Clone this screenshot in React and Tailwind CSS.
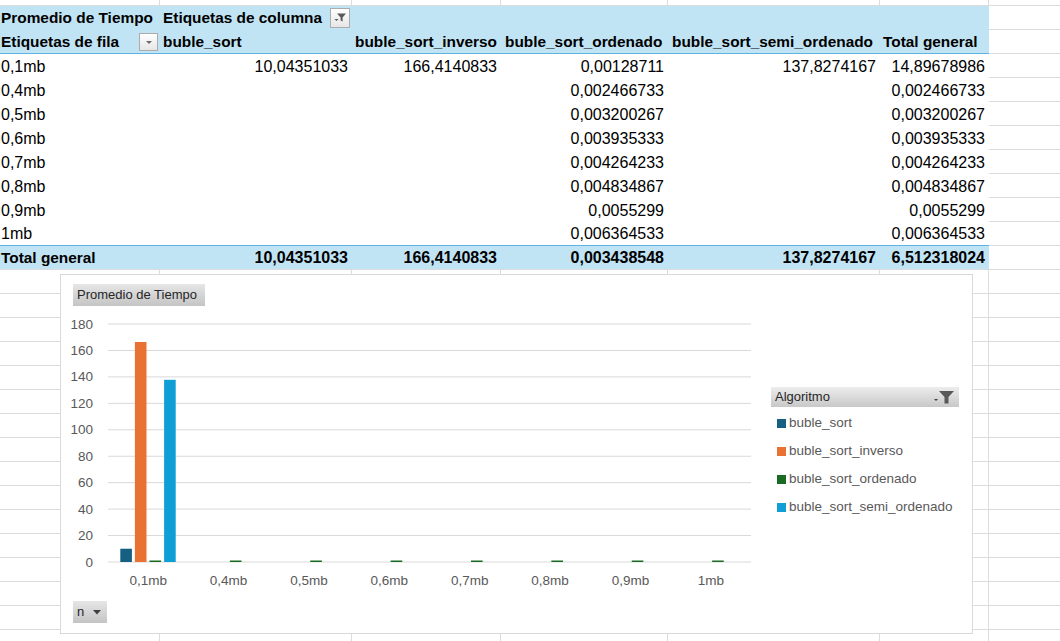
import React from "react";

const gridB = "border-r border-b border-[#dcdcdc]";
const colW = ["w-[160px]", "w-[192px]", "w-[149px]", "w-[167px]", "w-[212px]", "w-[109px]", "w-[90px]"];

const data = [
  ["0,1mb", "10,04351033", "166,4140833", "0,00128711", "137,8274167", "14,89678986"],
  ["0,4mb", "", "", "0,002466733", "", "0,002466733"],
  ["0,5mb", "", "", "0,003200267", "", "0,003200267"],
  ["0,6mb", "", "", "0,003935333", "", "0,003935333"],
  ["0,7mb", "", "", "0,004264233", "", "0,004264233"],
  ["0,8mb", "", "", "0,004834867", "", "0,004834867"],
  ["0,9mb", "", "", "0,0055299", "", "0,0055299"],
  ["1mb", "", "", "0,006364533", "", "0,006364533"],
];
const totals = ["Total general", "10,04351033", "166,4140833", "0,003438548", "137,8274167", "6,512318024"];

function GrayRow({ h = "h-[24px]" }) {
  return (
    <div className={`flex ${h}`}>
      {colW.map((c, i) => (
        <div key={i} className={`${c} shrink-0 ${gridB}`} />
      ))}
    </div>
  );
}

function GCell() {
  return <div className={`w-[90px] shrink-0 h-full ${gridB}`} />;
}

function FilterBtn() {
  return (
    <div className="w-[20px] h-[20px] shrink-0 border border-[#acacac] bg-gradient-to-b from-[#ffffff] to-[#e6e6e6] flex items-center justify-center">
      <svg width="16" height="16" viewBox="0 0 16 16">
        <path d="M5 3.5 H14 L10.6 7.5 V11.5 L8.6 10.5 V7.5 Z" fill="#5a5a5a" />
        <path d="M2.5 9 H6.5 L4.5 11 Z" fill="#5a5a5a" />
      </svg>
    </div>
  );
}

function DropBtn() {
  return (
    <div className="w-[19px] h-[18px] shrink-0 border border-[#acacac] bg-gradient-to-b from-[#ffffff] to-[#e6e6e6] flex items-center justify-center">
      <svg width="10" height="10" viewBox="0 0 10 10">
        <path d="M2 4 H8 L5 7 Z" fill="#6a6a6a" />
      </svg>
    </div>
  );
}

const numCell = "shrink-0 h-full flex items-center justify-end pr-[4px] text-[16px]";

function Chart() {
  const axisY = 287;
  const step = 26.44;
  const gx0 = 47;
  const gx1 = 690;
  const catW = (gx1 - gx0) / 8;
  const cats = ["0,1mb", "0,4mb", "0,5mb", "0,6mb", "0,7mb", "0,8mb", "0,9mb", "1mb"];
  const colors = ["#156082", "#E97132", "#196B24", "#0F9ED5"];
  const vals = [
    [10.04351033, 166.4140833, 0.00128711, 137.8274167],
    [0, 0, 0.002466733, 0],
    [0, 0, 0.003200267, 0],
    [0, 0, 0.003935333, 0],
    [0, 0, 0.004264233, 0],
    [0, 0, 0.004834867, 0],
    [0, 0, 0.0055299, 0],
    [0, 0, 0.006364533, 0],
  ];
  const offs = [12.3, 26.9, 41.5, 56.1];
  const legend = ["buble_sort", "buble_sort_inverso", "buble_sort_ordenado", "buble_sort_semi_ordenado"];
  const legendTop = ["top-[140px]", "top-[168px]", "top-[196px]", "top-[224px]"];
  const legendBg = ["bg-[#156082]", "bg-[#E97132]", "bg-[#196B24]", "bg-[#0F9ED5]"];
  return (
    <div className="absolute left-[60px] top-[274px] w-[913px] h-[360px] border border-[#d9d9d9] bg-white">
      <svg className="absolute left-0 top-0" width="911" height="358" style={{ fontFamily: "'Liberation Sans', Arial, sans-serif" }}>
        {Array.from({ length: 10 }).map((_, i) => {
          const y = axisY - i * step;
          return (
            <g key={i}>
              <line x1={gx0} x2={gx1} y1={y} y2={y} stroke="#d9d9d9" strokeWidth="1" />
              <text x={32} y={y} textAnchor="end" dominantBaseline="central" fontSize="13.5" fill="#595959">
                {i * 20}
              </text>
            </g>
          );
        })}
        {vals.map((row, ci) =>
          row.map((v, bi) => {
            if (v === 0) return null;
            let h = (v / 20) * step;
            if (h < 1.5) h = 1.5;
            return (
              <rect key={ci + "-" + bi} x={gx0 + ci * catW + offs[bi]} y={axisY - h} width={11.6} height={h} fill={colors[bi]} />
            );
          })
        )}
        {cats.map((c, i) => (
          <text key={c} x={gx0 + i * catW + catW / 2} y={305} textAnchor="middle" dominantBaseline="central" fontSize="13.5" fill="#595959">
            {c}
          </text>
        ))}
      </svg>

      <div className="absolute left-[12px] top-[9px] w-[132px] h-[22px] bg-gradient-to-b from-[#e6e6e6] to-[#c4c4c4] flex items-center pl-[4px] text-[13px] text-[#262626]">
        Promedio de Tiempo
      </div>

      <div className="absolute left-[710px] top-[112px] w-[188px] h-[20px] bg-gradient-to-b from-[#ededed] to-[#c8c8c8] flex items-center justify-between pl-[4px] pr-[3px] text-[13px] text-[#262626]">
        <span>Algoritmo</span>
        <svg width="24" height="16" viewBox="0 0 24 16">
          <path d="M2 10 H6 L4 12 Z" fill="#404040" />
          <path d="M7 2 H22 L16.5 8 V14.5 L12.5 14.5 V8 Z" fill="#595959" />
        </svg>
      </div>

      {legend.map((l, i) => (
        <div key={l} className={`absolute left-[716px] ${legendTop[i]} flex items-center h-[16px] text-[13.5px] text-[#595959]`}>
          <div className={`w-[9px] h-[9px] ${legendBg[i]} mr-[3px]`} />
          <span>{l}</span>
        </div>
      ))}

      <div className="absolute left-[12px] top-[326px] w-[34px] h-[22px] bg-gradient-to-b from-[#e6e6e6] to-[#c4c4c4] flex items-center justify-between pl-[4px] pr-[5px] text-[13px] text-[#262626]">
        <span>n</span>
        <svg width="10" height="10" viewBox="0 0 10 10">
          <path d="M1 3 H9 L5 7.5 Z" fill="#404040" />
        </svg>
      </div>
    </div>
  );
}

export default function App() {
  return (
    <div className="relative w-[1060px] h-[641px] overflow-hidden bg-white text-black font-['Liberation_Sans',Arial,sans-serif]">
      <GrayRow h="h-[6px]" />

      {/* Header row 1 */}
      <div className="flex h-[24px]">
        <div className="flex w-[989px] shrink-0 bg-[#c1e4f5] items-center font-bold text-[15.4px]">
          <div className="w-[160px] shrink-0 pl-[1px]">Promedio de Tiempo</div>
          <div className="w-[192px] shrink-0 flex items-center justify-between pl-[3px] pr-[2px]">
            <span>Etiquetas de columna</span>
            <FilterBtn />
          </div>
        </div>
        <GCell />
      </div>

      {/* Header row 2 */}
      <div className="flex h-[24px]">
        <div className="flex w-[989px] shrink-0 bg-[#c1e4f5] items-center font-bold text-[15.4px] border-b border-[#5db4e4]">
          <div className="w-[160px] shrink-0 flex items-center justify-between pl-[1px] pr-[2px]">
            <span>Etiquetas de fila</span>
            <DropBtn />
          </div>
          <div className="w-[192px] shrink-0 pl-[3px]">buble_sort</div>
          <div className="w-[149px] shrink-0 pl-[3px]">buble_sort_inverso</div>
          <div className="w-[167px] shrink-0 pl-[4px]">buble_sort_ordenado</div>
          <div className="w-[212px] shrink-0 pl-[4px]">buble_sort_semi_ordenado</div>
          <div className="w-[109px] shrink-0 pl-[3px]">Total general</div>
        </div>
        <GCell />
      </div>

      {/* Data rows */}
      {data.map((r, idx) => (
        <div key={r[0]} className="flex h-[24px]">
          <div
            className={`flex w-[989px] shrink-0 h-full pt-[1px] ${
              idx === data.length - 1 ? "border-b border-[#5db4e4]" : ""
            }`}
          >
            <div className="w-[160px] shrink-0 h-full flex items-center pl-[1px] text-[16px]">{r[0]}</div>
            <div className={`w-[192px] ${numCell}`}>{r[1]}</div>
            <div className={`w-[149px] ${numCell} pr-[3px]`}>{r[2]}</div>
            <div className={`w-[167px] ${numCell}`}>{r[3]}</div>
            <div className={`w-[212px] ${numCell}`}>{r[4]}</div>
            <div className={`w-[109px] ${numCell}`}>{r[5]}</div>
          </div>
          <GCell />
        </div>
      ))}

      {/* Total row */}
      <div className="flex h-[24px]">
        <div className="flex w-[989px] shrink-0 h-full pt-[1px] bg-[#c1e4f5] font-bold border-b border-[#dcdcdc]">
          <div className="w-[160px] shrink-0 h-full flex items-center pl-[1px] text-[15.4px]">{totals[0]}</div>
          <div className={`w-[192px] ${numCell}`}>{totals[1]}</div>
          <div className={`w-[149px] ${numCell} pr-[3px]`}>{totals[2]}</div>
          <div className={`w-[167px] ${numCell}`}>{totals[3]}</div>
          <div className={`w-[212px] ${numCell}`}>{totals[4]}</div>
          <div className={`w-[109px] ${numCell}`}>{totals[5]}</div>
        </div>
        <GCell />
      </div>

      {Array.from({ length: 16 }).map((_, i) => (
        <GrayRow key={i} />
      ))}

      <Chart />
    </div>
  );
}
